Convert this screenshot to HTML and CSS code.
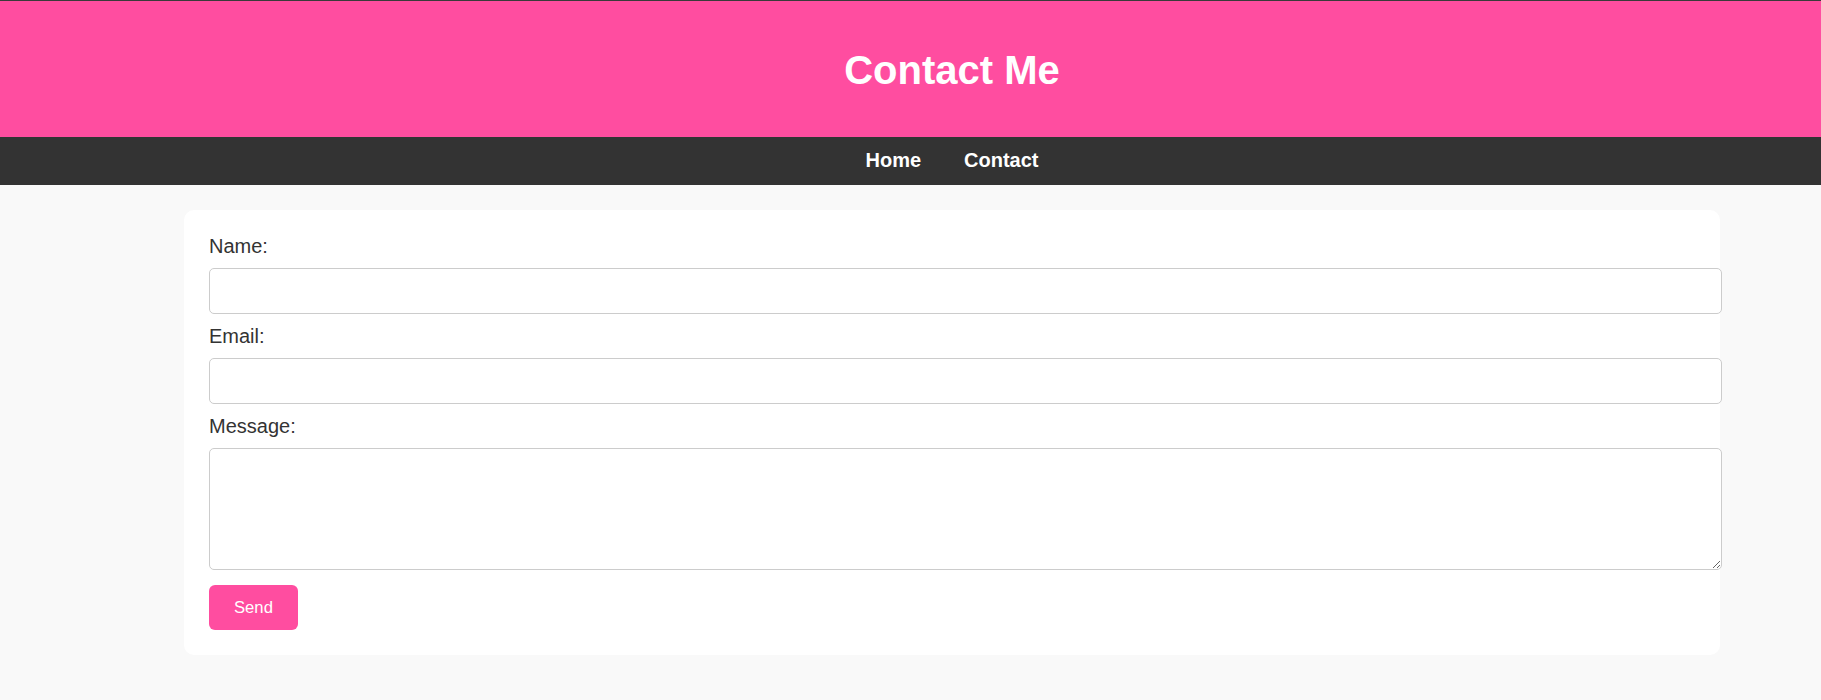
FILE: index.html
```html
<!DOCTYPE html>
<html lang="en">
<head>
<meta charset="utf-8">
<title>Contact Me</title>
<link rel="stylesheet" href="styles.css">
</head>
<body>
<header class="site-header">
  <h1 class="site-title">Contact Me</h1>
</header>
<nav class="site-nav">
  <a class="nav-link" href="#">Home</a>
  <a class="nav-link" href="#">Contact</a>
</nav>
<main class="main">
  <form class="card">
    <label class="field-label" for="name">Name:</label>
    <input class="field-input" type="text" id="name">
    <label class="field-label" for="email">Email:</label>
    <input class="field-input" type="email" id="email">
    <label class="field-label" for="message">Message:</label>
    <textarea class="field-input field-textarea" id="message"></textarea>
    <button class="send-btn" type="button">Send</button>
  </form>
</main>
</body>
</html>
```

FILE: styles.css
```css
html, body {
  margin: 0;
  padding: 0;
}
body {
  background: #f9f9f9;
  font-family: "Liberation Sans", Arial, sans-serif;
  font-size: 20px;
  color: #333;
  min-height: 700px;
}
.site-header {
  background: #ff4da0;
  border-top: 1px solid #3a3a3a;
  padding: 46px 0 44px 83px;
  text-align: center;
}
.site-title {
  margin: 0;
  font-size: 40px;
  line-height: 46px;
  font-weight: bold;
  color: #fff;
}
.site-nav {
  background: #333;
  display: flex;
  justify-content: center;
  gap: 43px;
  padding: 12px 0 13px 83px;
}
.nav-link {
  color: #fff;
  font-weight: bold;
  font-size: 20px;
  line-height: 23px;
  text-decoration: none;
}
.main {
  padding: 25px 101px 46px 184px;
}
.card {
  background: #fff;
  border-radius: 10px;
  padding: 25px 25px 25px;
  display: flex;
  flex-direction: column;
  align-items: flex-start;
}
.field-label {
  display: block;
  font-size: 20px;
  line-height: 23px;
  margin-bottom: 10px;
  color: #333;
}
.field-input {
  display: block;
  width: 100%;
  margin: 0 0 11px;
  padding: 12.5px;
  border: 1px solid #ccc;
  border-radius: 5px;
  font-family: "Liberation Sans", Arial, sans-serif;
  font-size: 16.67px;
  line-height: 19px;
  height: 19px;
  background: #fff;
  color: #333;
  outline: none;
}
.field-textarea {
  height: 95px;
  margin-bottom: 15px;
  resize: vertical;
}
.send-btn {
  background: #ff4da0;
  color: #fff;
  border: none;
  border-radius: 6px;
  padding: 12.5px 25px;
  font-family: "Liberation Sans", Arial, sans-serif;
  font-size: 16.67px;
  line-height: 20px;
  cursor: pointer;
}
```
